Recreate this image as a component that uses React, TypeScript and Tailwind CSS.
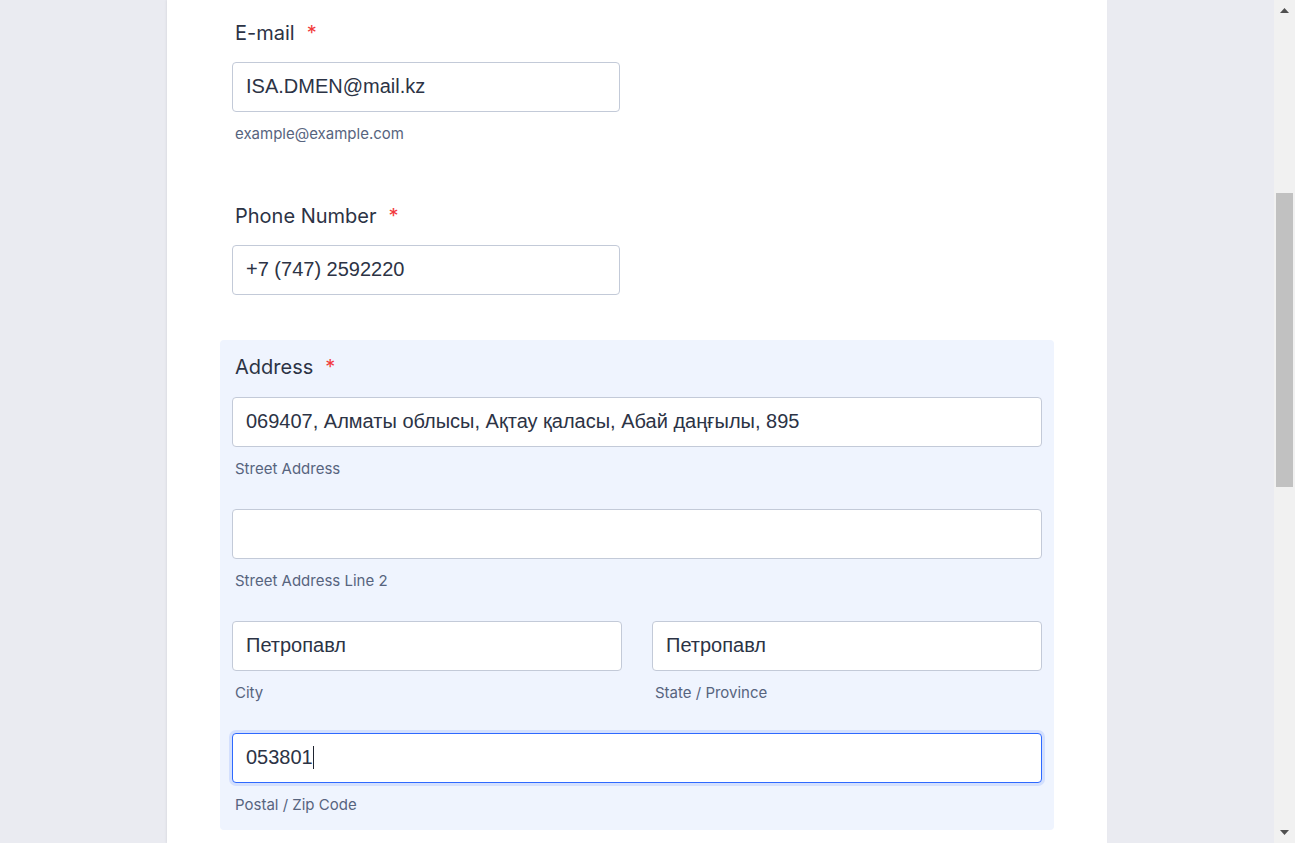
import React from 'react';

const labelCls =
  "block pl-[3px] text-[20px] leading-7 font-normal text-[#2c3345] [font-family:Inter,'Noto_Sans',sans-serif]";
const subCls =
  "block pl-[3px] mt-3 text-[15px] leading-5 text-[#57647e] [font-family:Inter,'Noto_Sans',sans-serif]";
const inputCls =
  "block w-full h-[50px] px-[13px] pb-[2px] bg-white border border-[#c3cad8] rounded-[4px] text-[20px] text-[#2c3345] outline-none [font-family:'Liberation_Sans',Arial,sans-serif]";

function Label({ text }: { text: string }) {
  return (
    <label className={labelCls}>
      {text}
      <span className="ml-3 text-[#f23a3c]">*</span>
    </label>
  );
}

function Field({ value, sub }: { value: string; sub?: string }) {
  return (
    <div>
      <input className={inputCls} defaultValue={value} readOnly />
      {sub && <span className={subCls}>{sub}</span>}
    </div>
  );
}

export default function App() {
  return (
    <div className="w-full h-[843px] overflow-hidden flex bg-[#eaebf1]">
      <div className="flex-1 flex">
        <div className="ml-[167px] w-[940px] h-full bg-white shadow-[-1px_0_2px_rgba(0,0,0,0.06)] pt-[19px] px-[53px]">
          {/* E-mail */}
          <div className="px-3">
            <Label text="E-mail" />
            <div className="mt-[15px] w-[388px]">
              <Field value="ISA.DMEN@mail.kz" sub="example@example.com" />
            </div>
          </div>

          {/* Phone */}
          <div className="px-3 mt-[58px]">
            <Label text="Phone Number" />
            <div className="mt-[15px] w-[388px]">
              <Field value="+7 (747) 2592220" />
            </div>
          </div>

          {/* Address */}
          <div className="mt-[45px] bg-[#eff4fe] rounded-[4px] px-3 pt-[13px] pb-[15px]">
            <Label text="Address" />
            <div className="mt-4 flex flex-col gap-[30px]">
              <Field
                value="069407, Алматы облысы, Ақтау қаласы, Абай даңғылы, 895"
                sub="Street Address"
              />
              <Field value="" sub="Street Address Line 2" />
              <div className="grid grid-cols-2 gap-x-[30px]">
                <Field value="Петропавл" sub="City" />
                <Field value="Петропавл" sub="State / Province" />
              </div>
              <div>
                <div className="flex items-center w-full h-[50px] px-[13px] pb-[2px] bg-white border border-[#2e69ff] rounded-[4px] shadow-[0_0_0_3px_#d4e0fd] text-[20px] text-[#2c3345] [font-family:'Liberation_Sans',Arial,sans-serif]">
                  053801
                  <span className="inline-block w-px h-[23px] bg-[#1f2430]" />
                </div>
                <span className={subCls}>Postal / Zip Code</span>
              </div>
            </div>
          </div>
        </div>
      </div>

      {/* scrollbar */}
      <div className="w-[21px] h-full bg-[#f1f1f1] flex flex-col items-center">
        <div className="h-[21px] w-full flex items-center justify-center">
          <svg width="9" height="5" viewBox="0 0 9 5">
            <polygon points="4.5,0 9,5 0,5" fill="#505050" />
          </svg>
        </div>
        <div className="mt-[172px] w-[17px] h-[294px] bg-[#c1c1c1]" />
        <div className="flex-1" />
        <div className="h-[21px] w-full flex items-center justify-center">
          <svg width="9" height="5" viewBox="0 0 9 5">
            <polygon points="0,0 9,0 4.5,5" fill="#505050" />
          </svg>
        </div>
      </div>
    </div>
  );
}
